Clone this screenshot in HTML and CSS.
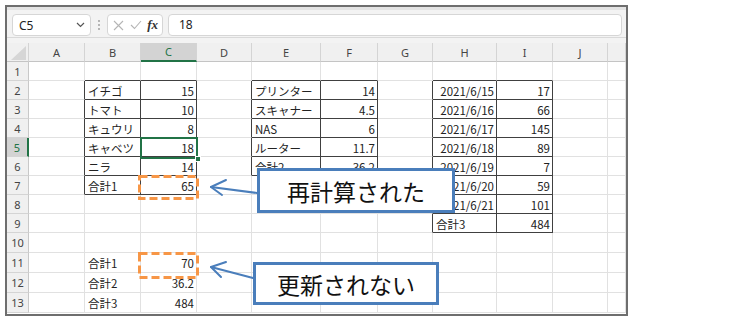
FILE: index.html
```html
<!DOCTYPE html>
<html lang="ja">
<head>
  <meta charset="UTF-8">
  <title>再計算</title>
  <link rel="stylesheet" href="styles.css">
</head>
<body>
  <div class="page">
    <div class="window">
      <div class="ribbon-edge"></div>

      <!-- Formula bar -->
      <div class="formula-bar">
        <div class="name-box">
          <span>C5</span>
          <svg width="9" height="6" viewBox="0 0 9 6"><path d="M1 1 L4.5 4.5 L8 1" fill="none" stroke="#555" stroke-width="1.2"/></svg>
        </div>
        <svg class="grip" width="6" height="12" viewBox="0 0 6 12"><circle cx="3" cy="2" r="0.9" fill="#999"/><circle cx="3" cy="6" r="0.9" fill="#999"/><circle cx="3" cy="10" r="0.9" fill="#999"/></svg>
        <div class="fx-box">
          <svg width="11" height="11" viewBox="0 0 11 11"><path d="M1 1 L10 10 M10 1 L1 10" stroke="#b5b5b5" stroke-width="1.1"/></svg>
          <svg width="12" height="10" viewBox="0 0 12 10"><path d="M1 5 L4.5 8.5 L11 1" fill="none" stroke="#b5b5b5" stroke-width="1.1"/></svg>
          <span class="fx">fx</span>
        </div>
        <div class="formula-input">18</div>
      </div>
      <div class="sheet-gap"></div>

      <!-- Sheet -->
      <table class="grid">
        <colgroup>
          <col class="w-rh"><col class="w56"><col class="w56"><col class="w56"><col class="w55"><col class="w69">
          <col class="w57"><col class="w55"><col class="w64"><col class="w56"><col class="w55"><col class="w18">
        </colgroup>
        <tr class="col-heads">
          <th class="corner"><svg width="15" height="14" viewBox="0 0 15 14"><path d="M15 0 L15 14 L0 14 Z" fill="#d6d6d6"/></svg></th>
          <th>A</th><th>B</th><th class="active">C</th><th>D</th><th>E</th><th>F</th><th>G</th><th>H</th><th>I</th><th>J</th><th></th>
        </tr>
        <tr><th class="rh">1</th><td></td><td class="bt"></td><td class="bt"></td><td></td><td class="bt"></td><td class="bt"></td><td></td><td class="bt"></td><td class="bt"></td><td></td><td></td></tr>
        <tr><th class="rh">2</th><td class="bl"></td><td class="bx">イチゴ</td><td class="bx n">15</td><td class="bl"></td><td class="bx">プリンター</td><td class="bx n">14</td><td class="bl"></td><td class="bx n">2021/6/15</td><td class="bx n">17</td><td></td><td></td></tr>
        <tr><th class="rh">3</th><td class="bl"></td><td class="bx">トマト</td><td class="bx n">10</td><td class="bl"></td><td class="bx">スキャナー</td><td class="bx n">4.5</td><td class="bl"></td><td class="bx n">2021/6/16</td><td class="bx n">66</td><td></td><td></td></tr>
        <tr><th class="rh">4</th><td class="bl"></td><td class="bx">キュウリ</td><td class="bx n">8</td><td class="bl"></td><td class="bx">NAS</td><td class="bx n">6</td><td class="bl"></td><td class="bx n">2021/6/17</td><td class="bx n">145</td><td></td><td></td></tr>
        <tr><th class="rh active">5</th><td class="bl"></td><td class="bx">キャベツ</td><td class="bx n">18</td><td class="bl"></td><td class="bx">ルーター</td><td class="bx n">11.7</td><td class="bl"></td><td class="bx n">2021/6/18</td><td class="bx n">89</td><td></td><td></td></tr>
        <tr><th class="rh">6</th><td class="bl"></td><td class="bx">ニラ</td><td class="bx n">14</td><td class="bl"></td><td class="bx">合計2</td><td class="bx n">36.2</td><td class="bl"></td><td class="bx n">2021/6/19</td><td class="bx n">7</td><td></td><td></td></tr>
        <tr><th class="rh">7</th><td class="bl"></td><td class="bx">合計1</td><td class="bx n">65</td><td></td><td></td><td></td><td class="bl"></td><td class="bx n">2021/6/20</td><td class="bx n">59</td><td></td><td></td></tr>
        <tr><th class="rh">8</th><td></td><td></td><td></td><td></td><td></td><td></td><td class="bl"></td><td class="bx n">2021/6/21</td><td class="bx n">101</td><td></td><td></td></tr>
        <tr><th class="rh">9</th><td></td><td></td><td></td><td></td><td></td><td></td><td class="bl"></td><td class="bx">合計3</td><td class="bx n">484</td><td></td><td></td></tr>
        <tr class="tall"><th class="rh">10</th><td></td><td></td><td></td><td></td><td></td><td></td><td></td><td></td><td></td><td></td><td></td></tr>
        <tr class="tall"><th class="rh">11</th><td></td><td>合計1</td><td class="n">70</td><td></td><td></td><td></td><td></td><td></td><td></td><td></td><td></td></tr>
        <tr class="tall"><th class="rh">12</th><td></td><td>合計2</td><td class="n">36.2</td><td></td><td></td><td></td><td></td><td></td><td></td><td></td><td></td></tr>
        <tr class="tall"><th class="rh">13</th><td></td><td>合計3</td><td class="n">484</td><td></td><td></td><td></td><td></td><td></td><td></td><td></td><td></td></tr>
      </table>
    </div>

    <!-- Overlays: selection, marks, callouts -->
    <div class="selection"><span class="fill-handle"></span></div>

    <svg class="marks" width="756" height="322" viewBox="0 0 756 322">
      <rect x="139.5" y="176.5" width="58" height="22" fill="none" stroke="#f79646" stroke-width="3" stroke-dasharray="8 4"/>
      <rect x="139.5" y="253.5" width="58" height="24" fill="none" stroke="#f79646" stroke-width="3" stroke-dasharray="8 4"/>
      <g fill="none" stroke="#4a7ebb" stroke-width="2" stroke-linecap="round" stroke-linejoin="round">
        <path d="M257 193 L211 187"/>
        <path d="M226 180 L211 187 L222 195"/>
        <path d="M253 278 L211 267"/>
        <path d="M226 262 L211 267 L221 277"/>
      </g>
    </svg>

    <div class="callout callout-recalc">再計算された</div>
    <div class="callout callout-stale">更新されない</div>
  </div>
</body>
</html>
```

FILE: styles.css
```css
* {
  margin: 0;
  padding: 0;
  box-sizing: border-box;
}

:root {
  --grid-line: #e1e1e1;
  --head-line: #d4d4d4;
  --head-bg: #f0f0f0;
  --box-line: #404040;
  --excel-green: #217346;
  --callout-blue: #4a7ebb;
}

body {
  background: #fff;
  font-family: "Noto Sans CJK JP", "Noto Sans", sans-serif;
  color: #222;
}

.page {
  position: relative;
  width: 756px;
  height: 322px;
  overflow: hidden;
}

.window {
  margin: 5px 0 0 5px;
  width: 623px;
  height: 311px;
  border: 2px solid #6e6e6e;
  background: #fff;
  overflow: hidden;
}

.ribbon-edge {
  height: 3px;
  background: #e3e3e3;
}

/* Formula bar */
.formula-bar {
  display: flex;
  align-items: flex-start;
  gap: 5px;
  height: 28px;
  padding: 4px 4px 0 5px;
  background: #f3f3f3;
  border-bottom: 1px solid #d9d9d9;
}

.name-box,
.fx-box,
.formula-input {
  height: 22px;
  background: #fff;
  border: 1px solid #d6d6d6;
  border-radius: 4px;
}

.name-box {
  width: 79px;
  display: flex;
  align-items: center;
  justify-content: space-between;
  padding: 0 5px 0 6px;
  font-family: "Noto Sans", sans-serif;
  font-size: 12px;
}

.grip {
  margin-top: 5px;
}

.fx-box {
  width: 56px;
  display: flex;
  align-items: center;
  justify-content: space-between;
  padding: 0 4px 0 5px;
}

.fx {
  font-family: "Liberation Serif", serif;
  font-style: italic;
  font-weight: 700;
  font-size: 13px;
  color: #333;
}

.formula-input {
  flex: 1;
  padding-left: 10px;
  font-family: "Noto Sans", sans-serif;
  font-size: 12px;
  line-height: 20px;
}

.sheet-gap {
  height: 5px;
  background: #f3f3f3;
}

/* Sheet grid */
.grid {
  border-collapse: separate;
  border-spacing: 0;
  table-layout: fixed;
  width: 619px;
}

.w-rh { width: 22px; }
.w55 { width: 55px; }
.w56 { width: 56px; }
.w57 { width: 57px; }
.w64 { width: 64px; }
.w69 { width: 69px; }
.w18 { width: 18px; }

.grid th,
.grid td {
  height: 19px;
  padding: 1px 2px 0 3px;
  border-right: 1px solid var(--grid-line);
  border-bottom: 1px solid var(--grid-line);
  font-size: 11.5px;
  white-space: nowrap;
  overflow: hidden;
}

.grid tr.tall th,
.grid tr.tall td {
  height: 20px;
}

.grid th {
  background: var(--head-bg);
  border-color: var(--head-line);
  font-family: "Noto Sans", sans-serif;
  font-weight: 400;
  font-size: 11px;
  color: #444;
  text-align: center;
  padding: 0;
}

.col-heads th {
  border-bottom-color: #c4c4c4;
}

.grid th.corner {
  text-align: right;
  vertical-align: bottom;
  padding: 0 2px 1px 0;
}

.grid th.corner svg {
  display: block;
  margin-left: auto;
}

.grid th.rh {
  border-right-color: #c8c8c8;
}

.grid th.active {
  background: #d3d3d3;
  color: var(--excel-green);
}

.col-heads th.active {
  border-bottom: 2px solid var(--excel-green);
}

.grid th.rh.active {
  border-right: 2px solid var(--excel-green);
}

.grid td.n {
  text-align: right;
}

.grid td.bx {
  border-right-color: var(--box-line);
  border-bottom-color: var(--box-line);
}

.grid td.bl {
  border-right-color: var(--box-line);
}

.grid td.bt {
  border-bottom-color: var(--box-line);
}

/* Overlays */
.selection {
  position: absolute;
  left: 140px;
  top: 137px;
  width: 58px;
  height: 22px;
  border: 2px solid var(--excel-green);
}

.fill-handle {
  position: absolute;
  right: -5px;
  bottom: -5px;
  width: 6px;
  height: 6px;
  background: var(--excel-green);
  border: 1px solid #fff;
}

.marks {
  position: absolute;
  left: 0;
  top: 0;
  pointer-events: none;
}

.callout {
  position: absolute;
  display: flex;
  align-items: center;
  justify-content: center;
  background: #fff;
  border: 3px solid var(--callout-blue);
  font-size: 23px;
  color: #111;
}

.callout-recalc {
  left: 257px;
  top: 168px;
  width: 198px;
  height: 45px;
}

.callout-stale {
  left: 253px;
  top: 262px;
  width: 186px;
  height: 43px;
}
```
